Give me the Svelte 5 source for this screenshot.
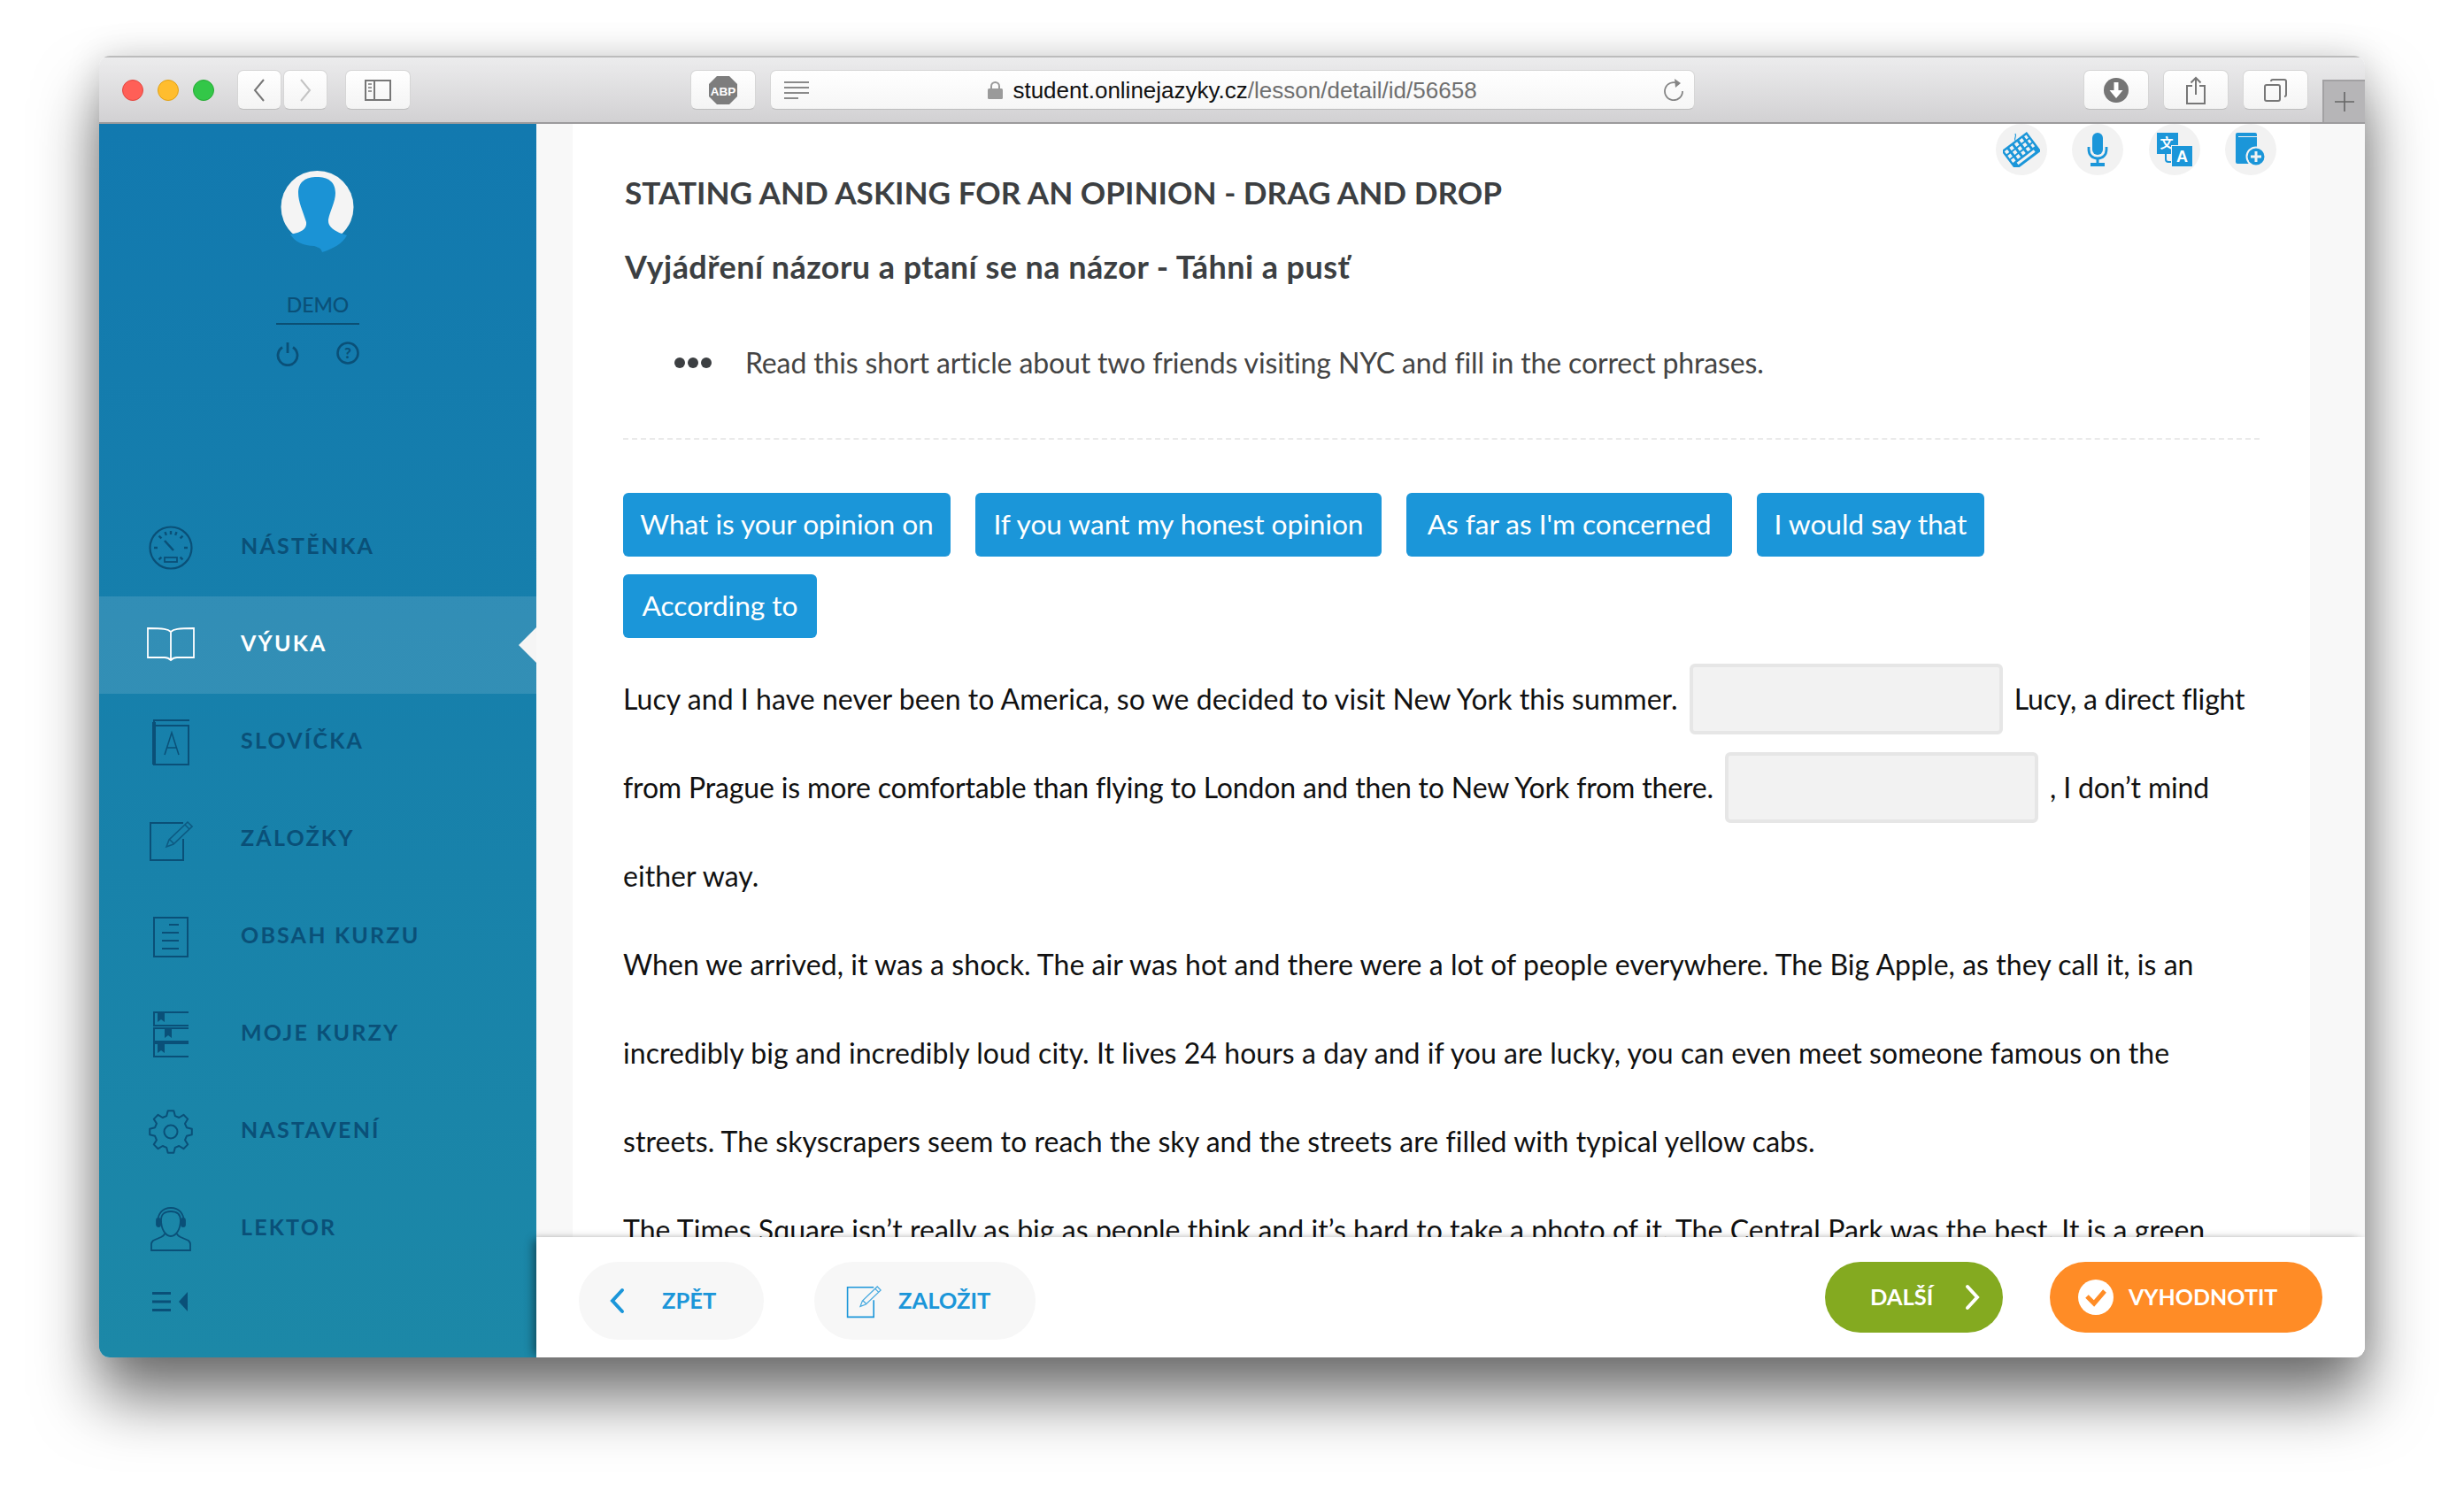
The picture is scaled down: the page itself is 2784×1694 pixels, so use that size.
<script>
  const nav = [
    { label: 'NÁSTĚNKA', icon: 'gauge' },
    { label: 'VÝUKA', icon: 'book', active: true },
    { label: 'SLOVÍČKA', icon: 'dict' },
    { label: 'ZÁLOŽKY', icon: 'note' },
    { label: 'OBSAH KURZU', icon: 'list' },
    { label: 'MOJE KURZY', icon: 'courses' },
    { label: 'NASTAVENÍ', icon: 'gear' },
    { label: 'LEKTOR', icon: 'tutor' }
  ];
  const chips = [
    { text: 'What is your opinion on', w: 370 },
    { text: 'If you want my honest opinion', w: 459 },
    { text: "As far as I'm concerned", w: 368 },
    { text: 'I would say that', w: 257 },
    { text: 'According to', w: 219 }
  ];
  const ticks = [-135, -90, -45, -20, 20, 45, 90, 135];

  // 8 tooth cog outline around the centre of a 50x50 box
  function cog() {
    const pt = (r, deg) => {
      const a = (deg * Math.PI) / 180;
      return `${(25 + r * Math.cos(a)).toFixed(1)} ${(25 + r * Math.sin(a)).toFixed(1)}`;
    };
    let d = '';
    for (let i = 0; i < 8; i++) {
      const c = i * 45 - 90;
      d += `${i ? 'L' : 'M'}${pt(18.5, c - 15)}L${pt(24, c - 8)}L${pt(24, c + 8)}L${pt(18.5, c + 15)}`;
    }
    return d + 'Z';
  }
</script>

{#snippet noteIcon()}
  <path d="M39 6H2v42h37V24" fill="none" stroke="currentColor" stroke-width="2" />
  <path d="M20 33l3-8 21-20 5 5-21 20z M24 25l5 5 M41 8l5 5" fill="none" stroke="currentColor" stroke-width="1.6" opacity=".8" />
{/snippet}

<div class="page">
  <div class="window">
    <header class="toolbar">
      <div class="lights"><i class="red"></i><i class="yellow"></i><i class="green"></i></div>
      <div class="btn nav-btn back">
        <svg width="16" height="26" viewBox="0 0 16 26"><path d="M13 1L3 13l10 12" fill="none" stroke="#777" stroke-width="2" /></svg>
      </div>
      <div class="btn nav-btn fwd">
        <svg width="16" height="26" viewBox="0 0 16 26"><path d="M3 1l10 12L3 25" fill="none" stroke="#c4c4c4" stroke-width="2" /></svg>
      </div>
      <div class="btn side-btn">
        <svg width="30" height="24" viewBox="0 0 30 24"><rect x="1" y="1" width="28" height="22" fill="none" stroke="#777" stroke-width="2" /><path d="M11 1v22" stroke="#777" stroke-width="2" /><path d="M4 5h4M4 9h4M4 13h4" stroke="#999" stroke-width="2" /></svg>
      </div>
      <div class="btn abp">
        <svg width="34" height="34" viewBox="0 0 34 34"><path d="M10 1h14l9 9v14l-9 9H10l-9-9V10z" fill="#7d7d7d" /><text x="17" y="22.500" text-anchor="middle" font-size="13.500" font-weight="700" fill="#fff" font-family="Liberation Sans, sans-serif">ABP</text></svg>
      </div>
      <div class="url">
        <svg class="reader" width="30" height="22" viewBox="0 0 30 22"><path d="M1 2h28M1 8h28M1 14h28M1 20h16" stroke="#8a8a8a" stroke-width="2" /></svg>
        <svg width="17" height="20" viewBox="0 0 17 20"><rect y="8" width="17" height="12" rx="1.500" fill="#9a9a9a" /><path d="M4 9V5.500a4.500 4.500 0 0 1 9 0V9" fill="none" stroke="#9a9a9a" stroke-width="2" /></svg>
        <span class="addr"><b>student.onlinejazyky.cz</b>/lesson/detail/id/56658</span>
        <svg class="reload" width="24" height="26" viewBox="0 0 24 26"><path d="M17 6.500A10 10 0 1 0 22 15" fill="none" stroke="#858585" stroke-width="1.800" /><path d="M13 1l7 5-6 5z" fill="#858585" /></svg>
      </div>
      <div class="btn tool first">
        <svg width="30" height="30" viewBox="0 0 30 30"><circle cx="15" cy="15" r="14" fill="#757575" /><path d="M12.500 6h5v9h5L15 24l-7.500-9h5z" fill="#fff" /></svg>
      </div>
      <div class="btn tool">
        <svg width="24" height="32" viewBox="0 0 24 32"><path d="M8 11H2v20h20V11h-6" fill="none" stroke="#777" stroke-width="2" /><path d="M12 21V2M6.500 7.500L12 2l5.500 5.500" fill="none" stroke="#777" stroke-width="2" /></svg>
      </div>
      <div class="btn tool">
        <svg width="26" height="26" viewBox="0 0 26 26"><rect x="1" y="7" width="17" height="18" rx="2" fill="none" stroke="#777" stroke-width="2" /><path d="M8 3a2 2 0 0 1 2-2h13a2 2 0 0 1 2 2v15a2 2 0 0 1-2 2" fill="none" stroke="#777" stroke-width="2" /></svg>
      </div>
      <div class="newtab">
        <svg width="24" height="24" viewBox="0 0 24 24"><path d="M12 1v22M1 12h22" stroke="#666" stroke-width="1.600" /></svg>
      </div>
    </header>

    <div class="body">
      <aside class="sidebar">
        <div class="profile">
          <svg width="84" height="94" viewBox="0 0 84 94">
            <circle cx="41.500" cy="41" r="41" fill="#f4f4f4" />
            <path d="M11 72C20 70 30 68 29 58C25 45 20 35 20 25C20 12 29 7 41 7C53 7 62 12 62 25C62 35 56 45 54 55C53 66 66 70 75 73C70 82 60 88 47 92C46 88 44 87 38 85C26 85 16 80 11 72Z" fill="#1b93d5" />
          </svg>
          <div class="demo">DEMO</div>
          <div class="profile-icons">
            <svg width="26" height="28" viewBox="0 0 26 28"><path d="M7 6.500a11 11 0 1 0 12 0M13 1v12" fill="none" stroke="currentColor" stroke-width="2.800" /></svg>
            <svg width="26" height="26" viewBox="0 0 26 26"><circle cx="13" cy="13" r="11.500" fill="none" stroke="currentColor" stroke-width="2.600" /><text x="13" y="19" text-anchor="middle" font-size="17" font-weight="900" fill="currentColor" font-family="Lato, sans-serif">?</text></svg>
          </div>
        </div>
        <nav>
          {#each nav as item}
            <div class="row" class:active={item.active}>
              <span class="ico">
                {#if item.icon === 'gauge'}
                  <svg width="50" height="50" viewBox="0 0 50 50" fill="none" stroke="currentColor" stroke-width="2.200">
                    <circle cx="25" cy="25" r="23.500" />
                    {#each ticks as t}<path d="M25 6v4" transform="rotate({t} 25 25)" stroke-width="2.400" />{/each}
                    <path d="M25 6v4" stroke-width="2.400" />
                    <path d="M18 17l10 11" stroke-width="2.600" />
                    <rect x="18" y="36" width="14" height="5" stroke-width="1.800" />
                  </svg>
                {:else if item.icon === 'book'}
                  <svg width="56" height="42" viewBox="0 0 56 42" fill="none" stroke="currentColor" stroke-width="1.800">
                    <path d="M28 6C25 3 20 2 2 2v33h19c3 0 5 1 7 3 2-2 4-3 7-3h19V2c-18 0-23 1-26 4zM28 6v32" />
                  </svg>
                {:else if item.icon === 'dict'}
                  <svg width="42" height="52" viewBox="0 0 42 52" fill="none" stroke="currentColor" stroke-width="2">
                    <path d="M42 1H2v50h39V7H3" />
                    <path d="M2 3v48" stroke-width="4" />
                    <path d="M14 40l8-25 8 25M17 32h11" stroke-width="1.500" />
                  </svg>
                {:else if item.icon === 'note'}
                  <svg width="50" height="50" viewBox="0 0 50 50">{@render noteIcon()}</svg>
                {:else if item.icon === 'list'}
                  <svg width="40" height="46" viewBox="0 0 40 46" fill="none" stroke="currentColor" stroke-width="2">
                    <rect x="1" y="1" width="38" height="44" />
                    <path d="M18 9h11M10 18h19M10 27h19M10 36h19" />
                  </svg>
                {:else if item.icon === 'courses'}
                  <svg width="40" height="52" viewBox="0 0 40 52" fill="none" stroke="currentColor" stroke-width="2">
                    <path d="M40 1H1v15h39M40 19H1v15h39M40 36H1v15h39" />
                    <path d="M5 1h8v11l-4-3-4 3zM13 19h8v11l-4-3-4 3zM5 36h8v11l-4-3-4 3z" fill="currentColor" stroke="none" />
                  </svg>
                {:else if item.icon === 'gear'}
                  <svg width="50" height="50" viewBox="0 0 50 50" fill="none" stroke="currentColor" stroke-width="2" stroke-linejoin="round">
                    <circle cx="25" cy="25" r="7.500" />
                    <path d={cog()} />
                  </svg>
                {:else if item.icon === 'tutor'}
                  <svg width="46" height="50" viewBox="0 0 46 50" fill="none" stroke="currentColor" stroke-width="1.800">
                    <path d="M8 18C8 7 14 1 23 1s15 6 15 17" />
                    <path d="M12 15c0-7 4-10 11-10s11 3 11 10c0 10-5 18-11 18s-11-8-11-18z" />
                    <rect x="7" y="13" width="4" height="9" rx="2" fill="currentColor" />
                    <rect x="35" y="13" width="4" height="9" rx="2" fill="currentColor" />
                    <path d="M16 30c0 2-2 3-4 4l-9 4c-1 1-2 2-2 4v7h44v-7c0-2-1-3-2-4l-9-4c-2-1-4-2-4-4" />
                  </svg>
                {/if}
              </span>
              <span class="lbl">{item.label}</span>
            </div>
          {/each}
        </nav>
        <div class="collapse">
          <svg width="40" height="22" viewBox="0 0 40 22"><path d="M0 1.500h21M0 11h21M0 20.500h21" stroke="currentColor" stroke-width="3" /><path d="M40 0v22L30 11z" fill="currentColor" /></svg>
        </div>
      </aside>

      <main>
        <div class="scroll">
          <article>
            <div class="tools">
              <span class="circle">
                <svg width="42" height="40" viewBox="0 0 42 40">
                  <path d="M14 10c-2-3 2-4 0-8" fill="none" stroke="#1b96d9" stroke-width="1.200" />
                  <g transform="rotate(-37 21 22)">
                    <rect x="3" y="8" width="36" height="27" fill="#1b96d9" />
                    <path d="M5.500 10.500h4v4h-4zM12.500 10.500h4v4h-4zM19.500 10.500h4v4h-4zM26.500 10.500h4v4h-4zM33.500 10.500h3v4h-3zM5.500 16.500h4v4h-4zM12.500 16.500h4v4h-4zM19.500 16.500h4v4h-4zM26.500 16.500h4v4h-4zM33.500 16.500h3v4h-3zM5.500 22.500h4v4h-4zM12.500 22.500h4v4h-4zM19.500 22.500h4v4h-4zM26.500 22.500h4v4h-4zM33.500 22.500h3v4h-3zM9 29h24v3H9z" fill="#f2f2f2" />
                  </g>
                </svg>
              </span>
              <span class="circle">
                <svg width="24" height="38" viewBox="0 0 24 38">
                  <rect x="6" y="0" width="12" height="25" rx="6" fill="#1b96d9" />
                  <path d="M2 16v3c0 6 4 10 10 10s10-4 10-10v-3" fill="none" stroke="#1b96d9" stroke-width="2.800" />
                  <path d="M10.500 28h3v6h-3zM4 34h16v4H4z" fill="#1b96d9" />
                </svg>
              </span>
              <span class="circle">
                <svg width="42" height="38" viewBox="0 0 42 38">
                  <rect x="1" y="0" width="24" height="24" fill="#1b96d9" />
                  <text x="12" y="17" text-anchor="middle" font-size="15" font-weight="700" fill="#fff" font-family="Noto Sans CJK SC, sans-serif">文</text>
                  <path d="M11 24v6a3 3 0 0 0 3 3h5" fill="none" stroke="#1b96d9" stroke-width="2" />
                  <rect x="17" y="14" width="24" height="24" fill="#f2f2f2" />
                  <rect x="18" y="15" width="23" height="23" fill="#1b96d9" />
                  <text x="29.500" y="33" text-anchor="middle" font-size="18" font-weight="700" fill="#fff" font-family="Liberation Sans, sans-serif">A</text>
                </svg>
              </span>
              <span class="circle">
                <svg width="34" height="38" viewBox="0 0 34 38">
                  <path d="M2 0h20a2 2 0 0 1 2 2v2H3v1h21v30H2a2 2 0 0 1-2-2V2a2 2 0 0 1 2-2z" fill="#1b96d9" />
                  <circle cx="23" cy="27" r="10.500" fill="#1b96d9" stroke="#f2f2f2" stroke-width="2" />
                  <path d="M23 21v12M17 27h12" stroke="#f2f2f2" stroke-width="3" />
                </svg>
              </span>
            </div>
            <h1>STATING AND ASKING FOR AN OPINION - DRAG AND DROP</h1>
            <h2>Vyjádření názoru a ptaní se na názor - Táhni a pusť</h2>
            <div class="instr">
              <span class="dots"><i></i><i></i><i></i></span>
              <span>Read this short article about two friends visiting NYC and fill in the correct phrases.</span>
            </div>
            <div class="sep"></div>
            <div class="chips">
              {#each chips as c}<div class="chip" style="width: {c.w}px">{c.text}</div>{/each}
            </div>
            <div class="text">
              <div class="line">Lucy and I have never been to America, so we decided to visit New York this summer.<span class="gap"></span><span class="tail">Lucy, a direct flight</span></div>
              <div class="line tight">from Prague is more comfortable than flying to London and then to New York from there.<span class="gap"></span>, I don’t mind</div>
              <div class="line">either way.</div>
              <div class="line">When we arrived, it was a shock. The air was hot and there were a lot of people everywhere. The Big Apple, as they call it, is an</div>
              <div class="line">incredibly big and incredibly loud city. It lives 24 hours a day and if you are lucky, you can even meet someone famous on the</div>
              <div class="line">streets. The skyscrapers seem to reach the sky and the streets are filled with typical yellow cabs.</div>
              <div class="line">The Times Square isn’t really as big as people think and it’s hard to take a photo of it. The Central Park was the best. It is a green</div>
            </div>
          </article>
        </div>
        <footer>
          <div class="pill zpet">
            <svg width="18" height="30" viewBox="0 0 18 30"><path d="M15 3L4 15l11 12" fill="none" stroke="#1b96d9" stroke-width="4" stroke-linecap="round" /></svg>
            <span>ZPĚT</span>
          </div>
          <div class="pill zalozit">
            <svg class="blue" width="40" height="40" viewBox="0 0 50 50">{@render noteIcon()}</svg>
            <span>ZALOŽIT</span>
          </div>
          <div class="pill dalsi">
            <span>DALŠÍ</span>
            <svg width="18" height="30" viewBox="0 0 18 30"><path d="M3 3l11 12L3 27" fill="none" stroke="#fff" stroke-width="4" stroke-linecap="round" /></svg>
          </div>
          <div class="pill vyhod">
            <svg width="40" height="40" viewBox="0 0 40 40"><circle cx="20" cy="20" r="20" fill="#fff" /><path d="M10 19l8 8 12-14" fill="none" stroke="#ff8c26" stroke-width="5" /></svg>
            <span>VYHODNOTIT</span>
          </div>
        </footer>
      </main>
    </div>
  </div>
</div>

<style>
  :global(body) { margin: 0; background: #fff; }
  .page { width: 2784px; height: 1694px; padding: 63px 112px 0; box-sizing: border-box; overflow: hidden; font-family: Lato, "Noto Sans", sans-serif; }
  .window { width: 2560px; height: 1471px; border-radius: 12px; overflow: hidden; display: flex; flex-direction: column; box-shadow: 0 46px 70px rgba(0, 0, 0, 0.55), 0 0 40px rgba(0, 0, 0, 0.14); }

  .toolbar { height: 77px; box-sizing: border-box; flex: none; display: flex; align-items: center; padding: 0 0 0 26px; background: linear-gradient(#ececed, #d2d1d3); border-top: 2px solid #bcbcbc; border-bottom: 2px solid #9c9b9d; }
  .lights { display: flex; gap: 16px; margin-right: 26px; margin-top: 0; }
  .lights i { width: 24px; height: 24px; border-radius: 50%; display: block; box-sizing: border-box; }
  .red { background: #ff5f57; border: 1px solid #e2463f; }
  .yellow { background: #ffbd2e; border: 1px solid #e1a116; }
  .green { background: #33c748; border: 1px solid #27aa35; }
  .btn { height: 45px; box-sizing: border-box; border-radius: 7px; background: linear-gradient(#fff, #f4f4f4); border: 1px solid #d6d6d6; border-bottom-color: #bdbdbd; display: flex; align-items: center; justify-content: center; }
  .nav-btn { width: 50px; }
  .fwd { margin-left: 2px; }
  .side-btn { width: 74px; margin-left: 20px; }
  .abp { width: 74px; margin-left: 316px; }
  .url { width: 1045px; height: 45px; margin-left: 16px; box-sizing: border-box; position: relative; border-radius: 7px; background: linear-gradient(#fff, #f6f6f6); border: 1px solid #d6d6d6; border-bottom-color: #bdbdbd; display: flex; align-items: center; justify-content: center; gap: 11px; }
  .reader { position: absolute; left: 14px; top: 11px; }
  .reload { position: absolute; right: 11px; top: 8px; }
  .addr { font: 26px "Liberation Sans", sans-serif; color: #6f6f6f; margin-top: 2px; }
  .addr b { font-weight: 400; color: #111; }
  .tool { width: 74px; margin-left: 16px; }
  .tool.first { margin-left: 439px; }
  .newtab { width: 48px; height: 48px; margin-left: 16px; align-self: flex-end; box-sizing: border-box; background: #b6b5b7; border: 2px solid #a2a1a3; border-width: 2px 0 0 2px; display: flex; align-items: center; justify-content: center; }

  .body { flex: 1; display: flex; min-height: 0; }
  .sidebar { width: 494px; flex: none; background: linear-gradient(#1279af, #1c88a7); color: #0a5078; }
  .profile { display: flex; flex-direction: column; align-items: center; padding-top: 53px; height: 424px; box-sizing: border-box; }
  .demo { width: 94px; margin-top: 43px; padding-bottom: 6px; border-bottom: 2px solid #0b4f74; text-align: center; font-size: 23px; font-weight: 500; line-height: 29px; }
  .profile-icons { display: flex; gap: 42px; margin-top: 19px; }
  .row { height: 110px; display: flex; align-items: center; position: relative; }
  .ico { width: 60px; margin-left: 51px; display: flex; justify-content: center; }
  .lbl { margin-left: 49px; margin-top: -6px; font-size: 25px; font-weight: 700; letter-spacing: 2.200px; }
  .row.active { background: rgba(255, 255, 255, 0.12); color: #fff; }
  .row.active::after { content: ""; position: absolute; right: 0; top: 35px; border: 20px solid transparent; border-right-color: #f5f5f5; border-left-width: 0; }
  .collapse { padding: 16px 0 0 60px; }

  main { flex: 1; min-width: 0; display: flex; flex-direction: column; background: #f8f8f8; }
  .scroll { height: 1258px; flex: none; overflow: hidden; padding: 0 62px 0 41px; }
  article { background: #fff; height: 100%; padding: 57px 0 0 57px; box-sizing: border-box; position: relative; color: #3c3f42; }
  .tools { position: absolute; top: 0; right: 38px; display: flex; gap: 28.500px; }
  .circle { width: 58px; height: 58px; border-radius: 50%; background: #f2f2f2; display: flex; align-items: center; justify-content: center; }
  h1 { margin: 0 0 0 2px; font-size: 35.200px; line-height: 40px; font-weight: 700; }
  h2 { margin: 44px 0 0 2px; font-size: 36px; line-height: 40px; font-weight: 700; letter-spacing: 0.440px; }
  .instr { margin-top: 69px; padding-left: 58px; display: flex; align-items: center; gap: 38px; font-size: 32px; line-height: 40px; letter-spacing: -0.140px; color: #444; }
  .dots { display: flex; gap: 3px; }
  .dots i { width: 12px; height: 12px; border-radius: 50%; background: #3c3f42; display: block; }
  .sep { margin: 65px 57px 0 0; border-top: 2px dashed #eaeaea; }
  .chips { margin-top: 60px; max-width: 1700px; display: flex; flex-wrap: wrap; gap: 20px 28px; }
  .chip { height: 72px; line-height: 70px; text-align: center; white-space: nowrap; box-sizing: border-box; background: #1b96d9; color: #fff; border-radius: 6px; font-size: 31.700px; letter-spacing: -0.050px; }
  .text { margin-top: 19px; color: #111; font-size: 32px; letter-spacing: 0.050px; }
  .line { height: 100px; line-height: 100px; white-space: nowrap; display: flex; align-items: center; }
  .line.tight, .tail { letter-spacing: -0.160px; }
  .gap { width: 354px; height: 80px; box-sizing: border-box; background: #f2f2f2; border: 4px solid #e6e6e6; border-radius: 6px; margin-left: 13px; margin-right: 13px; flex: none; }

  footer { flex: 1; background: #fff; position: relative; display: flex; align-items: flex-start; padding: 28px 48px 0; gap: 57px; box-shadow: -6px 0 10px -3px rgba(0, 0, 0, 0.45), 0 -1px 4px rgba(0, 0, 0, 0.05); }
  .pill { display: flex; align-items: center; border-radius: 44px; box-sizing: border-box; font-size: 25.500px; font-weight: 700; }
  .pill span { margin-top: -2px; }
  .zpet { width: 209px; height: 88px; background: #f7f7f7; color: #1b96d9; padding-left: 34px; gap: 42px; }
  .zalozit { width: 250px; height: 88px; background: #f7f7f7; color: #1b96d9; padding-left: 36px; gap: 19px; }
  .blue { color: #1b96d9; }
  .dalsi { width: 201px; height: 80px; margin-left: auto; background: #84aa20; color: #fff; padding-left: 51px; gap: 36px; border-radius: 40px; }
  .vyhod { width: 308px; height: 80px; margin-left: -4px; background: #ff8c26; color: #fff; padding-left: 32px; gap: 17px; border-radius: 40px; font-size: 25px; }
</style>
